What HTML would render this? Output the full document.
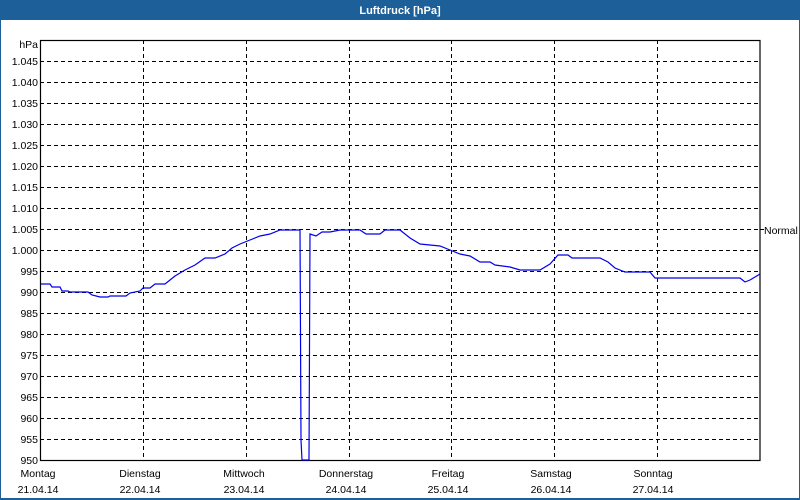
<!DOCTYPE html>
<html><head><meta charset="utf-8"><style>
html,body{margin:0;padding:0;width:800px;height:500px;overflow:hidden;background:#fff;font-family:"Liberation Sans",sans-serif;}
</style></head><body>
<svg width="800" height="500" xmlns="http://www.w3.org/2000/svg" font-family="Liberation Sans, sans-serif" font-size="10.5">
<rect x="0" y="0" width="800" height="500" fill="#fff"/>
<rect x="0" y="0" width="800" height="20" fill="#1d5f98"/>
<rect x="0" y="0" width="1" height="500" fill="#1d5f98"/>
<rect x="799" y="0" width="1" height="500" fill="#1d5f98"/>
<rect x="0" y="498" width="800" height="2" fill="#1d5f98"/>
<text x="400" y="14" fill="#fff" font-weight="bold" text-anchor="middle" font-size="11">Luftdruck [hPa]</text>
<g stroke="#000" stroke-dasharray="4,3" stroke-width="1">
<line x1="40" y1="61.5" x2="760" y2="61.5"/><line x1="40" y1="82.5" x2="760" y2="82.5"/><line x1="40" y1="103.5" x2="760" y2="103.5"/><line x1="40" y1="124.5" x2="760" y2="124.5"/><line x1="40" y1="145.5" x2="760" y2="145.5"/><line x1="40" y1="166.5" x2="760" y2="166.5"/><line x1="40" y1="187.5" x2="760" y2="187.5"/><line x1="40" y1="208.5" x2="760" y2="208.5"/><line x1="40" y1="229.5" x2="760" y2="229.5"/><line x1="40" y1="250.5" x2="760" y2="250.5"/><line x1="40" y1="271.5" x2="760" y2="271.5"/><line x1="40" y1="292.5" x2="760" y2="292.5"/><line x1="40" y1="313.5" x2="760" y2="313.5"/><line x1="40" y1="334.5" x2="760" y2="334.5"/><line x1="40" y1="355.5" x2="760" y2="355.5"/><line x1="40" y1="376.5" x2="760" y2="376.5"/><line x1="40" y1="397.5" x2="760" y2="397.5"/><line x1="40" y1="418.5" x2="760" y2="418.5"/><line x1="40" y1="439.5" x2="760" y2="439.5"/>
<line x1="143.5" y1="40" x2="143.5" y2="460"/><line x1="246.5" y1="40" x2="246.5" y2="460"/><line x1="349.5" y1="40" x2="349.5" y2="460"/><line x1="451.5" y1="40" x2="451.5" y2="460"/><line x1="554.5" y1="40" x2="554.5" y2="460"/><line x1="657.5" y1="40" x2="657.5" y2="460"/>
</g>
<rect x="40.5" y="40.5" width="719.5" height="420" fill="none" stroke="#000" stroke-width="1.2"/>
<line x1="760" y1="229.5" x2="764" y2="229.5" stroke="#000"/>
<text x="764" y="234" fill="#000">Normal</text>
<polyline fill="none" stroke="#0000ee" stroke-width="1.2" points="41,284 50,284 52,287 60,287 62,291 68,291 70,292 88,292 92,295 100,297 108,297 110,296 126,296 130,293 140,291 143,288 150,288 155,284 165,284 175,276 185,270 195,265 205,258 215,258 225,254 232,248 240,244 250,240 260,236 270,234 280,230 300,230 301,440 302,460 309,460 310,234 316,236 322,232 330,232 340,230 360,230 366,234 380,234 385,230 400,230 410,238 420,244 440,246 450,250 460,254 470,256 480,262 490,262 495,265 510,267 520,270 540,270 550,264 558,255 568,255 572,258 600,258 608,262 615,268 625,272 650,272 655,278 740,278 745,282 750,280 760,274"/>
<g fill="#000" text-anchor="end">
<text x="38" y="48">hPa</text>
<text x="38" y="65">1.045</text><text x="38" y="86">1.040</text><text x="38" y="107">1.035</text><text x="38" y="128">1.030</text><text x="38" y="149">1.025</text><text x="38" y="170">1.020</text><text x="38" y="191">1.015</text><text x="38" y="212">1.010</text><text x="38" y="233">1.005</text><text x="38" y="254">1.000</text><text x="38" y="275">995</text><text x="38" y="296">990</text><text x="38" y="317">985</text><text x="38" y="338">980</text><text x="38" y="359">975</text><text x="38" y="380">970</text><text x="38" y="401">965</text><text x="38" y="422">960</text><text x="38" y="443">955</text><text x="38" y="464">950</text>
</g>
<g fill="#000" text-anchor="middle">
<text x="38" y="477">Montag</text><text x="38" y="493">21.04.14</text>
<text x="140" y="477">Dienstag</text><text x="140" y="493">22.04.14</text>
<text x="244" y="477">Mittwoch</text><text x="244" y="493">23.04.14</text>
<text x="346" y="477">Donnerstag</text><text x="346" y="493">24.04.14</text>
<text x="448" y="477">Freitag</text><text x="448" y="493">25.04.14</text>
<text x="551" y="477">Samstag</text><text x="551" y="493">26.04.14</text>
<text x="653" y="477">Sonntag</text><text x="653" y="493">27.04.14</text>
</g>
</svg>
</body></html>
